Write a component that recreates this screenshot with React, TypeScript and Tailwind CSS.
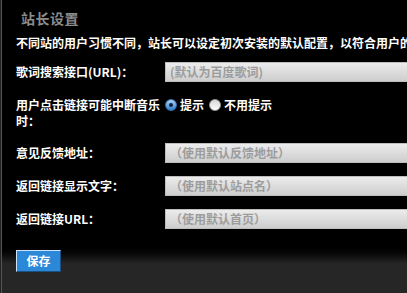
const font = "font-['Noto_Sans_CJK_SC','Noto_Sans',sans-serif]";

function Field({ placeholder }: { placeholder: string }) {
  return (
    <div className="flex-1 h-[20px] flex items-center pl-[4px] border border-[#bdbdbd] border-r-0 bg-gradient-to-b from-[#ececec] to-[#cdcdcd] text-[12px] text-[#9c9c9c] whitespace-nowrap overflow-hidden">
      {placeholder}
    </div>
  );
}

function Radio({ checked }: { checked?: boolean }) {
  return checked ? (
    <span className="w-[12px] h-[12px] rounded-full bg-gradient-to-b from-[#a9d2f5] to-[#2a7fd4] border border-[#3a6fa8] flex items-center justify-center">
      <span className="w-[4px] h-[4px] rounded-full bg-[#10233a]" />
    </span>
  ) : (
    <span className="w-[12px] h-[12px] rounded-full bg-gradient-to-b from-[#d8d8d8] to-[#ffffff] border border-[#9a9a9a]" />
  );
}

export default function App() {
  return (
    <div className={`w-[407px] h-[293px] overflow-hidden bg-[#222] pl-px ${font}`}>
      <div className="h-full border-l border-[#555] bg-gradient-to-b from-black from-[83%] to-[#262626] to-[90%] flex flex-col">
        <div className="pl-[19px] pt-[9px] text-[14px] leading-[18px] font-bold tracking-[0.5px] text-[#8c8c8c]">站长设置</div>

        <div className="pl-[14px] mt-[8px] text-[12px] leading-[16px] font-bold text-white whitespace-nowrap">
          不同站的用户习惯不同，站长可以设定初次安装的默认配置，以符合用户的
        </div>

        <div className="pl-[14px] flex flex-col text-[12px] font-bold text-white">
          <div className="flex items-center mt-[11px]">
            <div className="w-[149px] leading-[16px]">歌词搜索接口(URL)：</div>
            <Field placeholder="(默认为百度歌词)" />
          </div>

          <div className="flex items-start mt-[15px]">
            <div className="w-[149px] leading-[16px]">用户点击链接可能中断音乐时：</div>
            <div className="flex items-center h-[16px] gap-[3px]">
              <Radio checked />
              <span className="mr-[2px]">提示</span>
              <Radio />
              <span>不用提示</span>
            </div>
          </div>

          <div className="flex items-center mt-[14px]">
            <div className="w-[149px] leading-[16px]">意见反馈地址：</div>
            <Field placeholder="（使用默认反馈地址）" />
          </div>

          <div className="flex items-center mt-[13px]">
            <div className="w-[149px] leading-[16px]">返回链接显示文字：</div>
            <Field placeholder="（使用默认站点名）" />
          </div>

          <div className="flex items-center mt-[13px]">
            <div className="w-[149px] leading-[16px]">返回链接URL：</div>
            <Field placeholder="（使用默认首页）" />
          </div>

          <div className="mt-[21px]">
            <button className="w-[45px] h-[22px] bg-[#2b87d8] border border-t-[#cfe3f5] border-l-[#cfe3f5] border-b-[#1d4f80] border-r-[#1d4f80] text-white text-[12px] font-bold leading-none">
              保存
            </button>
          </div>
        </div>
      </div>
    </div>
  );
}
